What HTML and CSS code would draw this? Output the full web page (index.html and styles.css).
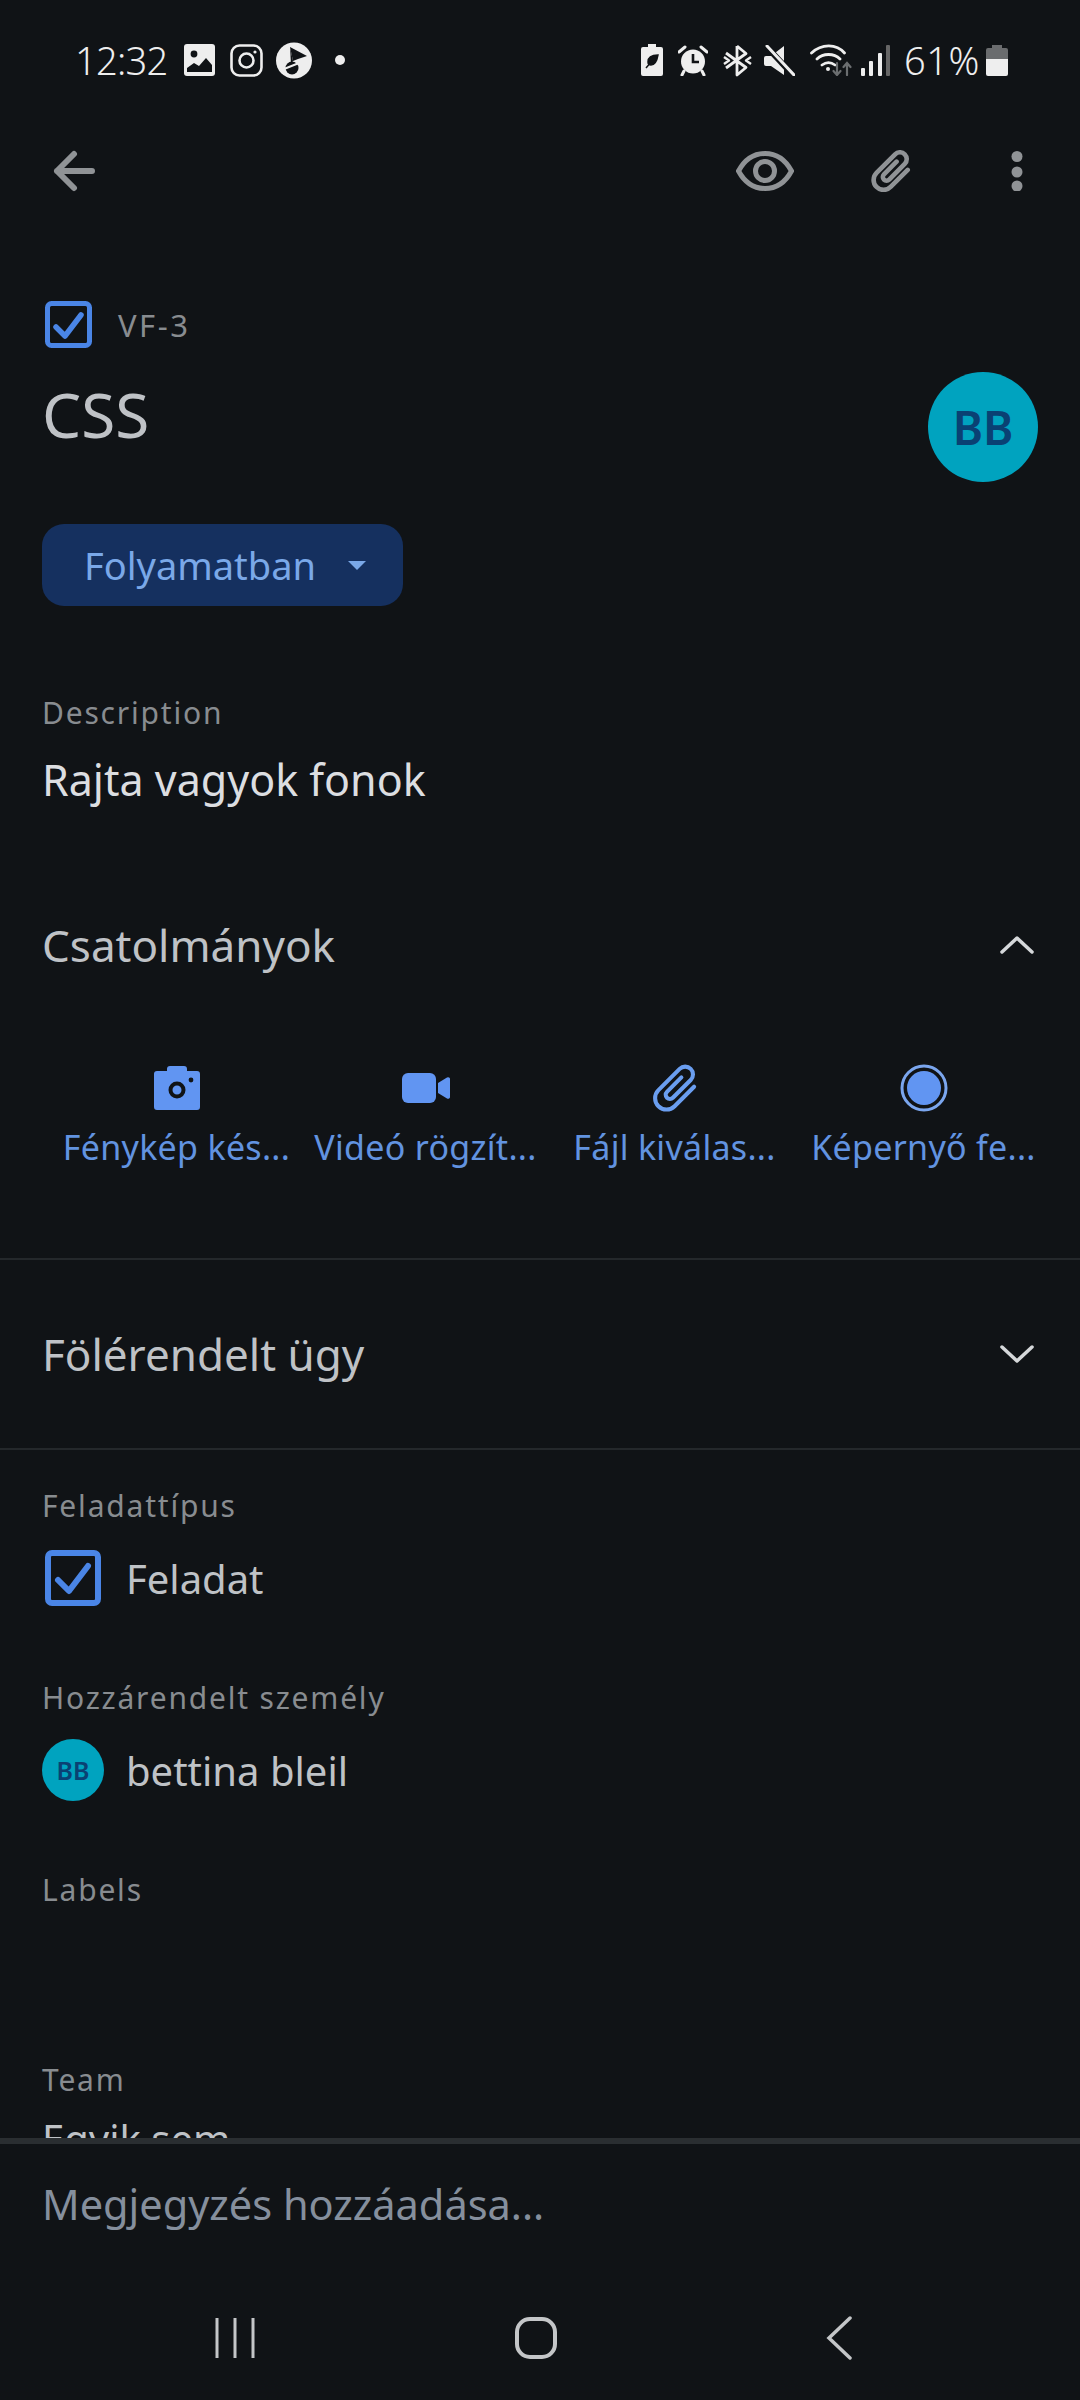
FILE: index.html

```html
<!DOCTYPE html>
<html lang="hu">
<head>
    <meta charset="UTF-8">
    <title>VF-3 CSS</title>
    <link rel="stylesheet" href="styles.css">
</head>
<body>
    <div class="status">
        <div class="status-left">
            <span class="time">12:32</span>
            <svg class="ic-gallery" width="31" height="32" viewBox="0 0 31 32"><rect width="31" height="32" rx="3" fill="#eee"/><circle cx="10" cy="10" r="3.4" fill="#101316"/><path d="M3 28v-4l7-5 5 3 7-8 6 7v7z" fill="#101316"/></svg>
            <svg class="ic-insta" width="33" height="33" viewBox="0 0 33 33" fill="none" stroke="#eee" stroke-width="2.6"><rect x="1.5" y="1.5" width="30" height="30" rx="8"/><circle cx="16.5" cy="16.5" r="7"/><circle cx="25" cy="8" r="1.6" fill="#eee" stroke="none"/></svg>
            <svg class="ic-play" width="36" height="37" viewBox="0 0 36 37"><circle cx="18" cy="18.500" r="18" fill="#eee"/><path d="M14 5l17 9-9 3-5 2z" fill="#101316"/><path d="M14 5l3 14-2 3z" fill="#101316"/><circle cx="16" cy="26" r="6.500" fill="#101316"/><path d="M8 27l20-8" stroke="#eee" stroke-width="2"/></svg>
            <span class="dot"></span>
        </div>
        <div class="status-right">
            <svg class="ic-leaf" width="22" height="32" viewBox="0 0 22 32"><path d="M7 0h8v3h5a2 2 0 0 1 2 2v25a2 2 0 0 1-2 2H2a2 2 0 0 1-2-2V5a2 2 0 0 1 2-2h5z" fill="#eee"/><path d="M17 11c-6 0-10 2-10 7 0 2 1 3 3 3 4 0 6-4 7-10zM5 24l6-7" fill="#101316" stroke="#101316" stroke-width="1.500"/></svg>
            <svg class="ic-alarm" width="30" height="31" viewBox="0 0 30 31"><circle cx="15" cy="16.500" r="12" fill="#eee"/><path d="M1 7l6-5M29 7l-6-5M6 26l-2 4M24 26l2 4" stroke="#eee" stroke-width="3" stroke-linecap="round"/><path d="M15 9v8h6" fill="none" stroke="#101316" stroke-width="2.600"/></svg>
            <svg class="ic-bt" width="29" height="33" viewBox="0 0 29 33" fill="none" stroke="#eee" stroke-width="2.800" stroke-linejoin="round"><path d="M14 2v29l9-7.500L3 9M14 2l9 7.500L3 24"/><path d="M1 13l5 3.500-5 3.500M28 13l-5 3.500 5 3.500" stroke-width="2.400"/></svg>
            <svg class="ic-mute" width="31" height="31" viewBox="0 0 31 31"><path d="M0 13a2 2 0 0 1 2-2h5L20 1v29L7 21H2a2 2 0 0 1-2-2z" fill="#eee"/><path d="M2 1l27 29" stroke="#101316" stroke-width="6"/><path d="M3 1l27 29" stroke="#eee" stroke-width="3" stroke-linecap="round"/></svg>
            <svg class="ic-wifi" width="43" height="32" viewBox="0 0 43 32" fill="none" stroke="#eee" stroke-width="2.800" stroke-linecap="round"><path d="M1.500 9c10-9.500 25-9.500 33 0M7 15c6-6 17-6 23 0M12 21c4-3 9-3 13 0"/><circle cx="18" cy="25" r="2" fill="#eee" stroke="none"/><path d="M27 19v12M23.500 27l3.500 4 3.500-4M37 31V19M33.500 23l3.500-4 3.500 4" stroke="#6b6e70" stroke-width="2.200"/></svg>
            <svg class="ic-signal" width="29" height="31" viewBox="0 0 29 31"><rect y="23" width="4" height="8" rx="1" fill="#eee"/><rect x="8" y="16" width="4" height="15" rx="1" fill="#eee"/><rect x="17" y="8" width="4" height="23" rx="1" fill="#eee"/><rect x="25" width="4" height="31" rx="1" fill="#666"/></svg>
            <span class="pct">61%</span>
            <svg class="ic-batt" width="22" height="31" viewBox="0 0 22 31"><path d="M6 0h10v3h4a2 2 0 0 1 2 2v9H0V5a2 2 0 0 1 2-2h4z" fill="#6a6c6e"/><path d="M0 14h22v15a2 2 0 0 1-2 2H2a2 2 0 0 1-2-2z" fill="#eee"/></svg>
        </div>
    </div>

    <div class="toolbar">
        <svg width="42" height="42" viewBox="0 0 42 42" fill="none" stroke="#909396" stroke-width="6" stroke-linecap="round" stroke-linejoin="round"><path d="M39 21H4M21 4L4 21l17 17"/></svg>
        <div class="toolbar-actions">
            <svg class="act-eye" width="58" height="40" viewBox="0 0 58 40" fill="none" stroke="#909396" stroke-width="5"><path d="M2.500 20C9 8 18 2.500 29 2.500S49 8 55.500 20C49 32 40 37.500 29 37.500S9 32 2.500 20z"/><circle cx="29" cy="20" r="9.500"/></svg>
            <svg class="act-clip" width="40" height="42" viewBox="2.500 2 19 20" fill="none" stroke="#909396" stroke-width="2.200" stroke-linecap="round"><path transform="rotate(45 12 12)" d="M17.250 6V17.500a4.750 4.750 0 0 1-9.500 0V5a3.250 3.250 0 0 1 6.500 0V15.500a1.750 1.750 0 0 1-3.500 0V7"/></svg>
            <svg class="act-more" width="12" height="40" viewBox="0 0 12 40" fill="#909396"><circle cx="6" cy="5.500" r="5.500"/><circle cx="6" cy="21" r="5.500"/><circle cx="6" cy="35" r="5.500"/></svg>
        </div>
    </div>

    <div class="main">
        <div class="head">
            <div>
                <div class="key">
                    <svg width="47" height="47" viewBox="0 0 47 47" fill="none"><rect x="2.500" y="2.500" width="42" height="42" rx="4" stroke="#4a85e6" stroke-width="5"/><path d="M11 26l9 9L36 14" stroke="#4a85e6" stroke-width="5.500" stroke-linecap="round" stroke-linejoin="round"/></svg>
                    <span class="key-text">VF-3</span>
                </div>
                <h1 class="title">CSS</h1>
            </div>
            <div class="avatar avatar-big">BB</div>
        </div>

        <div class="pill">
            <span>Folyamatban</span>
            <span class="caret"></span>
        </div>

        <div class="desc">
            <div class="label">Description</div>
            <div class="desc-text">Rajta vagyok fonok</div>
        </div>

        <div class="section-row attach-row">
            <span>Csatolmányok</span>
            <svg width="36" height="22" viewBox="0 0 36 22" fill="none" stroke="#d5d8da" stroke-width="3.500" stroke-linecap="round" stroke-linejoin="round"><path d="M3 18L18 4l15 14"/></svg>
        </div>

        <div class="attach-grid">
            <div class="attach">
                <svg width="48" height="44" viewBox="0 0 48 44"><path d="M14 5V3a3 3 0 0 1 3-3h14a3 3 0 0 1 3 3v2h10a3 3 0 0 1 3 3v33a3 3 0 0 1-3 3H4a3 3 0 0 1-3-3V8a3 3 0 0 1 3-3z" fill="#6195f2"/><circle cx="24" cy="24" r="6.500" fill="#6195f2" stroke="#101316" stroke-width="4"/><circle cx="38" cy="14" r="2.400" fill="#101316"/></svg>
                <span>Fénykép kés...</span>
            </div>
            <div class="attach">
                <svg width="48" height="44" viewBox="0 0 48 44"><rect y="7" width="34" height="30" rx="6" fill="#6195f2"/><path d="M36 17l9-5.500a2 2 0 0 1 3 2v17a2 2 0 0 1-3 2L36 27z" fill="#6195f2"/></svg>
                <span>Videó rögzít...</span>
            </div>
            <div class="attach">
                <svg width="48" height="50" viewBox="2.500 2 19 20" fill="none" stroke="#6a9ef0" stroke-width="1.700" stroke-linecap="round"><path transform="rotate(45 12 12)" d="M17.250 6V17.500a4.750 4.750 0 0 1-9.500 0V5a3.250 3.250 0 0 1 6.500 0V15.500a1.750 1.750 0 0 1-3.500 0V7"/></svg>
                <span>Fájl kiválas...</span>
            </div>
            <div class="attach">
                <svg width="48" height="48" viewBox="0 0 48 48"><circle cx="24" cy="24" r="22" fill="none" stroke="#7ba6ee" stroke-width="3"/><circle cx="24" cy="24" r="17" fill="#6195f2"/></svg>
                <span>Képernyő fe...</span>
            </div>
        </div>

        <div class="section-row parent-row">
            <span>Fölérendelt ügy</span>
            <svg width="36" height="22" viewBox="0 0 36 22" fill="none" stroke="#d5d8da" stroke-width="3.500" stroke-linecap="round" stroke-linejoin="round"><path d="M3 4l15 14L33 4"/></svg>
        </div>

        <div class="fields">
            <div class="field">
                <div class="label">Feladattípus</div>
                <div class="value">
                    <svg width="56" height="56" viewBox="0 0 56 56" fill="none"><rect x="3" y="3" width="50" height="50" rx="4" stroke="#4a85e6" stroke-width="6"/><path d="M13 30l11 11 19-25" stroke="#4a85e6" stroke-width="6" stroke-linecap="round" stroke-linejoin="round"/></svg>
                    <span>Feladat</span>
                </div>
            </div>
            <div class="field">
                <div class="label">Hozzárendelt személy</div>
                <div class="value">
                    <div class="avatar avatar-small">BB</div>
                    <span>bettina bleil</span>
                </div>
            </div>
            <div class="field field-short">
                <div class="label">Labels</div>
            </div>
            <div class="field">
                <div class="label">Team</div>
                <div class="value value-plain"><span>Egyik sem</span></div>
            </div>
        </div>
    </div>

    <div class="comment">Megjegyzés hozzáadása...</div>

    <div class="nav">
        <svg width="40" height="42" viewBox="0 0 40 42" fill="none" stroke="#c4c6c8" stroke-width="3"><path d="M2 1v40M20 1v40M38 1v40"/></svg>
        <svg class="nav-home" width="42" height="42" viewBox="0 0 42 42" fill="none" stroke="#c4c6c8" stroke-width="4"><rect x="2" y="2" width="38" height="38" rx="13"/></svg>
        <svg width="26" height="44" viewBox="0 0 26 44" fill="none" stroke="#c4c6c8" stroke-width="3.500" stroke-linecap="round"><path d="M24 2L3 22l21 20"/></svg>
    </div>
</body>
</html>
```

FILE: styles.css

```css
* { box-sizing: border-box; }
html, body { margin: 0; padding: 0; }
body { width: 1080px; height: 2400px; background: #101316; color: #d0d3d6; font-family: "Noto Sans", sans-serif; display: flex; flex-direction: column; overflow: hidden; }

/* status bar */
.status { height: 120px; flex: none; display: flex; justify-content: space-between; align-items: center; padding: 0 72px 0 75px; color: #eee; }
.status-left, .status-right { display: flex; align-items: center; }
.time { font-size: 38px; line-height: 44px; letter-spacing: -0.7px; font-weight: 300; width: 91px; margin-right: 18px; white-space: nowrap; }
.ic-insta { margin-left: 15px; }
.ic-play { margin-left: 13px; }
.dot { width: 10px; height: 10px; border-radius: 50%; background: #eee; margin-left: 23px; }
.ic-alarm { margin-left: 15px; }
.ic-bt { margin-left: 15px; }
.ic-mute { margin-left: 12px; }
.ic-wifi { margin-left: 15px; }
.ic-signal { margin-left: 8px; }
.pct { font-size: 38px; line-height: 44px; letter-spacing: 0.5px; font-weight: 300; width: 75px; margin-left: 14px; white-space: nowrap; }
.ic-batt { margin-left: 7px; }

/* toolbar */
.toolbar { height: 102px; flex: none; display: flex; justify-content: space-between; align-items: center; padding: 0 57px 0 53px; }
.toolbar-actions { display: flex; align-items: center; }
.act-clip { margin-left: 77px; }
.act-more { margin-left: 100px; }

/* scrolling part */
.main { flex: 1; min-height: 0; overflow: hidden; }
.head { display: flex; justify-content: space-between; align-items: flex-start; padding: 79px 42px 0 42px; }
.key { display: flex; align-items: center; height: 47px; padding-left: 3px; }
.key-text { font-size: 31px; letter-spacing: 2.5px; color: #888c90; margin-left: 26px; }
.title { font-size: 62px; line-height: 80px; font-weight: 400; color: #bfc2c6; margin: 26px 0 0; }
.avatar { border-radius: 50%; background: #00a3bf; color: #0a4173; font-weight: 600; display: flex; align-items: center; justify-content: center; flex: none; }
.avatar-big { width: 110px; height: 110px; font-size: 46px; margin-top: 71px; }
.avatar-small { width: 62px; height: 62px; font-size: 25px; }

.pill { display: flex; align-items: center; width: 361px; height: 82px; margin: 42px 0 0 42px; padding-left: 42px; border-radius: 22px; background: #15305f; color: #7aa8e8; font-size: 38px; }
.caret { width: 0; height: 0; border-left: 9px solid transparent; border-right: 9px solid transparent; border-top: 9px solid #7aa8e8; margin-left: 32px; }

.label { font-size: 30px; line-height: 40px; letter-spacing: 1.8px; color: #888c90; }
.desc { padding: 87px 42px 0; }
.desc-text { font-size: 43px; line-height: 56px; margin-top: 19px; color: #dcdee1; }

.section-row { display: flex; justify-content: space-between; align-items: center; padding: 0 45px 0 42px; font-size: 44px; color: #bfc2c6; }
.attach-row { height: 100px; margin-top: 87px; }
.attach-grid { display: grid; grid-template-columns: repeat(4, 249px); padding: 0 0 0 52px; height: 196px; border-bottom: 2px solid #24282b; align-content: start; margin-top: 69px; }
.attach { height: 110px; display: flex; flex-direction: column; align-items: center; color: #6293e0; font-size: 34px; line-height: 44px; letter-spacing: 0.3px; white-space: nowrap; }
.attach svg { height: 48px; flex: none; margin-bottom: 13px; }
.parent-row { height: 190px; border-bottom: 2px solid #24282b; }

.fields { padding: 36px 42px 0; }
.field { height: 192px; }
.field-short { height: 190px; }
.value { display: flex; align-items: center; gap: 22px; height: 64px; margin-top: 20px; font-size: 40px; color: #bfc2c6; }
.value svg { margin-left: 3px; margin-right: 3px; }
.value-plain { margin-top: 6px; }

.comment { height: 126px; flex: none; border-top: 6px solid #2a2e31; padding: 0 42px; display: flex; align-items: center; font-size: 41.500px; color: #858f9d; }
.nav { height: 136px; flex: none; display: flex; justify-content: space-between; align-items: center; padding: 12px 228px 0 215px; }
.nav-home { margin-right: 9px; }
```
